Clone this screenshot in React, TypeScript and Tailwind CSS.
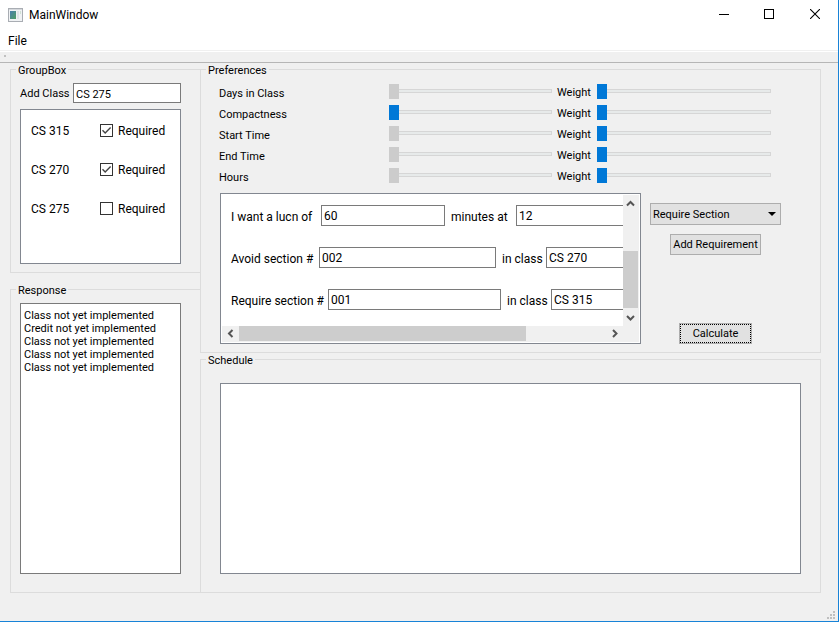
import { useState } from 'react';

const initialClasses = [
  { name: 'CS 315', required: true },
  { name: 'CS 270', required: true },
  { name: 'CS 275', required: false },
];

const responses = [
  'Class not yet implemented',
  'Credit not yet implemented',
  'Class not yet implemented',
  'Class not yet implemented',
  'Class not yet implemented',
];

const preferences = [
  { name: 'Days in Class', enabled: false },
  { name: 'Compactness', enabled: true },
  { name: 'Start Time', enabled: false },
  { name: 'End Time', enabled: false },
  { name: 'Hours', enabled: false },
];

const requirements = [
  { id: 'lunch', label: 'I want a lucn of', labelWidth: 'w-[90px]', value: '60', inputWidth: 'w-[124px]', label2: 'minutes at', label2Width: 'w-[65px]', value2: '12' },
  { id: 'avoid', label: 'Avoid section #', labelWidth: 'w-[88px]', value: '002', inputWidth: 'w-[177px]', label2: 'in class', label2Width: 'w-11', value2: 'CS 270' },
  { id: 'require', label: 'Require section #', labelWidth: 'w-[97px]', value: '001', inputWidth: 'w-[173px]', label2: 'in class', label2Width: 'w-11', value2: 'CS 315' },
];

function GroupBox({ title, className, children }: { title: string; className: string; children: React.ReactNode }) {
  return (
    <fieldset className={`min-w-0 border border-[#dcdcdc] ${className}`}>
      <legend className="ml-[5px] h-[13px] px-[2px] text-[11px] leading-[15px]">{title}</legend>
      {children}
    </fieldset>
  );
}

function Slider({ label, disabled }: { label: string; disabled?: boolean }) {
  return (
    <input
      type="range"
      aria-label={label}
      defaultValue={0}
      disabled={disabled}
      className="block h-[15px] w-full min-w-0 appearance-none bg-transparent [&::-webkit-slider-runnable-track]:h-1 [&::-webkit-slider-runnable-track]:border [&::-webkit-slider-runnable-track]:border-[#d6d6d6] [&::-webkit-slider-runnable-track]:bg-[#e7eaea] [&::-webkit-slider-thumb]:-mt-[6px] [&::-webkit-slider-thumb]:-ml-px [&::-webkit-slider-thumb]:h-[15px] [&::-webkit-slider-thumb]:w-[10px] [&::-webkit-slider-thumb]:appearance-none [&::-webkit-slider-thumb]:bg-[#0078d7] disabled:[&::-webkit-slider-thumb]:bg-[#cccccc]"
    />
  );
}

function ScrollButton({ label, path, className }: { label: string; path: string; className: string }) {
  return (
    <button aria-label={label} className={`flex shrink-0 items-center justify-center ${className}`}>
      <svg width="9" height="9" viewBox="0 0 9 9" fill="none" stroke="#555555" strokeWidth="2">
        <path d={path} />
      </svg>
    </button>
  );
}

function TitleBar() {
  return (
    <header className="flex h-[30px] items-center bg-white pl-2">
      <svg width="15" height="14" viewBox="0 0 15 14" className="mr-[6px]" shapeRendering="crispEdges">
        <defs>
          <linearGradient id="pane" x1="0" y1="0" x2="1" y2="1">
            <stop offset="0" stopColor="#4a7fae" />
            <stop offset="1" stopColor="#4f9e63" />
          </linearGradient>
        </defs>
        <rect width="15" height="14" fill="#a9adb3" />
        <rect x="1" y="1" width="13" height="1" fill="#d5d8dc" />
        <rect x="1" y="2" width="13" height="11" fill="#f0f2f4" />
        <rect x="2" y="3" width="6" height="8" fill="url(#pane)" />
        <rect x="9" y="3" width="2" height="8" fill="#dfe3e6" />
        <rect x="12" y="3" width="1" height="3" fill="#cfe0d4" />
      </svg>
      <h1 className="flex-1 text-xs">MainWindow</h1>
      <button aria-label="Minimize" className="flex h-full w-11 items-center justify-center">
        <svg width="10" height="10" shapeRendering="crispEdges"><rect y="4" width="10" height="1" /></svg>
      </button>
      <button aria-label="Maximize" className="flex h-full w-[46px] items-center justify-center pb-[2px]">
        <svg width="10" height="10" fill="none" stroke="black" shapeRendering="crispEdges"><rect x="0.5" y="0.5" width="9" height="9" /></svg>
      </button>
      <button aria-label="Close" className="flex h-full w-[46px] items-center justify-center pb-[2px]">
        <svg width="10" height="10" stroke="black" strokeWidth="1.1"><path d="M0 0 10 10M10 0 0 10" /></svg>
      </button>
    </header>
  );
}

function ClassList() {
  const [classes, setClasses] = useState(initialClasses);

  const toggle = (name: string) => {
    setClasses(classes.map(c => (c.name === name ? { ...c, required: !c.required } : c)));
  };

  return (
    <ul className="mt-[6px] h-[155px] border border-[#828790] bg-white pt-px text-xs">
      {classes.map(c => (
        <li key={c.name} className="flex h-[39px] items-center pl-[10px]">
          <span className="w-[69px]">{c.name}</span>
          <label className="flex items-center gap-[5px]">
            <span className="grid">
              <input
                type="checkbox"
                checked={c.required}
                onChange={() => toggle(c.name)}
                className="peer col-start-1 row-start-1 size-[13px] appearance-none border border-[#333333] bg-white"
              />
              <svg viewBox="0 0 13 13" className="pointer-events-none invisible col-start-1 row-start-1 size-[13px] peer-checked:visible" fill="none" stroke="#444444" strokeWidth="1.4">
                <path d="M2.5 6.3 5.2 9 10.6 3.6" />
              </svg>
            </span>
            Required
          </label>
        </li>
      ))}
    </ul>
  );
}

function RequirementList() {
  return (
    <div className="flex h-[151px] min-w-0 flex-1 flex-col border border-[#828790] bg-white p-px">
      <div className="flex min-h-0 flex-1">
        <div className="flex min-w-0 flex-1 flex-col gap-[21px] overflow-hidden pt-[10px] pl-[9px] text-xs">
          {requirements.map(r => (
            <div key={r.id} className="flex h-[21px] shrink-0 items-center">
              <label htmlFor={r.id} className={`shrink-0 pt-[2px] whitespace-nowrap ${r.labelWidth}`}>{r.label}</label>
              <input id={r.id} defaultValue={r.value} className={`h-[21px] shrink-0 border border-[#7a7a7a] bg-white px-[2px] ${r.inputWidth}`} />
              <label htmlFor={`${r.id}-2`} className={`ml-[6px] shrink-0 pt-[2px] whitespace-nowrap ${r.label2Width}`}>{r.label2}</label>
              <input id={`${r.id}-2`} defaultValue={r.value2} className="h-[21px] w-44 shrink-0 border border-[#7a7a7a] bg-white px-[2px]" />
            </div>
          ))}
        </div>
        <div className="flex w-4 flex-col bg-[#f0f0f0]">
          <ScrollButton label="Scroll up" path="M1 6.5 4.5 3 8 6.5" className="h-[17px] w-[15px]" />
          <div className="flex-1" />
          <div className="mb-px h-[57px] w-[15px] bg-[#cdcdcd]" />
          <ScrollButton label="Scroll down" path="M1 3 4.5 6.5 8 3" className="h-[17px] w-[15px]" />
        </div>
      </div>
      <div className="flex h-4 bg-[#f0f0f0] pr-4">
        <ScrollButton label="Scroll left" path="M6.5 1 3 4.5 6.5 8" className="h-[15px] w-[17px]" />
        <div className="h-[15px] flex-[287] bg-[#cdcdcd]" />
        <div className="flex-[80]" />
        <ScrollButton label="Scroll right" path="M3 1 6.5 4.5 3 8" className="h-[15px] w-[17px]" />
      </div>
    </div>
  );
}

export default function App() {
  return (
    <div className="flex min-h-screen flex-col border-r border-b border-[#1883d7] bg-[#f0f0f0] font-[Roboto,'Open_Sans',sans-serif] text-[11px] text-black">
      <TitleBar />
      <nav className="flex h-[22px] items-center border-b border-white bg-white pl-2 text-xs shadow-[inset_0_-1px_0_#f0f0f0]">
        <button>File</button>
      </nav>
      <div className="h-[11px] border-b border-[#b6b6b6] pt-[3px] pl-1">
        <div className="size-[2px] bg-[#c0c0c0]" />
      </div>

      <main className="flex flex-1 pr-[17px] pl-[10px]">
        <div className="flex w-[190px] shrink-0 flex-col gap-[10px]">
          <GroupBox title="GroupBox" className="border-r-0">
            <div className="pt-[7px] pr-[19px] pb-2 pl-[9px]">
              <div className="flex items-center">
                <label htmlFor="add-class" className="w-[53px] pt-[2px] whitespace-nowrap">Add Class</label>
                <input id="add-class" defaultValue="CS 275" className="h-5 min-w-0 flex-1 border border-[#7a7a7a] bg-white px-[2px] pt-[2px]" />
              </div>
              <ClassList />
            </div>
          </GroupBox>
          <GroupBox title="Response" className="flex flex-1 flex-col border-r-0">
            <ul className="mt-[7px] mr-[19px] mb-[18px] ml-[9px] flex-1 border border-[#7a7a7a] bg-white pt-[5px] pl-[3px] leading-[13px]">
              {responses.map((text, i) => (
                <li key={i}>{text}</li>
              ))}
            </ul>
          </GroupBox>
        </div>

        <div className="flex min-w-0 flex-1 flex-col">
          <GroupBox title="Preferences" className="">
            <div className="pt-1 pb-2">
              <div className="pr-[49px] pl-[18px]">
                {preferences.map(p => (
                  <div key={p.name} className="grid h-[21px] grid-cols-[170px_163fr_45px_174fr] items-center leading-[15px]">
                    <span className="pt-[6px]">{p.name}</span>
                    <Slider label={p.name} disabled={!p.enabled} />
                    <span className="pt-1 pl-[5px]">Weight</span>
                    <Slider label={`${p.name} weight`} />
                  </div>
                ))}
              </div>
              <div className="mt-2 flex pr-[39px] pl-[19px]">
                <RequirementList />
                <div className="ml-[9px] flex w-[131px] flex-col items-center pt-[10px]">
                  <div className="relative w-full">
                    <select aria-label="Requirement type" className="block h-[22px] w-full appearance-none border border-[#adadad] bg-[#e1e1e1] pt-[2px] pl-[2px]">
                      <option>Require Section</option>
                    </select>
                    <svg width="8" height="4" className="pointer-events-none absolute top-[9px] right-[5px]"><path d="M0 0h8L4 4z" /></svg>
                  </div>
                  <button className="mt-[9px] h-[21px] border border-[#adadad] bg-[#e1e1e1] px-[2px] pt-[2px] whitespace-nowrap">Add Requirement</button>
                  <button className="mt-auto h-[21px] w-[73px] border border-[#adadad] bg-[#e1e1e1]">
                    <span className="flex h-full items-center justify-center border border-dotted border-black pt-[2px]">Calculate</span>
                  </button>
                </div>
              </div>
            </div>
          </GroupBox>
          <GroupBox title="Schedule" className="flex flex-1 flex-col">
            <div className="mx-[19px] mt-[17px] mb-[18px] flex-1 border border-[#828790] bg-white" />
          </GroupBox>
        </div>
      </main>

      <footer className="flex h-7 items-end justify-end pr-[3px] pb-[2px]">
        <svg width="8" height="8" fill="#bfbfbf" shapeRendering="crispEdges">
          <path d="M6 0h2v2H6zM3 3h2v2H3zM6 3h2v2H6zM0 6h2v2H0zM3 6h2v2H3zM6 6h2v2H6z" />
        </svg>
      </footer>
    </div>
  );
}
